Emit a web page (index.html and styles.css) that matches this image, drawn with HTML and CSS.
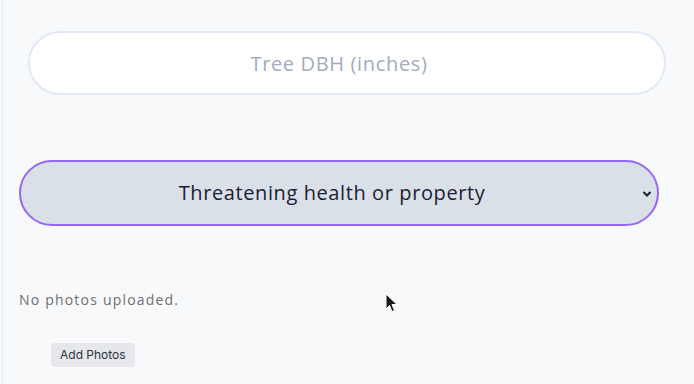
FILE: index.html
```html
<!DOCTYPE html>
<html lang="en">
<head>
    <title>Tree Request</title>
    <link rel="stylesheet" href="styles.css">
</head>
<body>
    <div class="panel">
        <div class="field-dbh">
            <input type="text" class="dbh-input" placeholder="Tree DBH (inches)">
        </div>

        <div class="field-reason">
            <div class="reason-select">
                <span class="reason-text">Threatening health or property</span>
                <svg class="chevron" width="10" height="8" viewBox="0 0 10 8">
                    <path d="M1.5 2 L5 5.5 L8.5 2" fill="none" stroke="#1a202c" stroke-width="2"/>
                </svg>
            </div>
        </div>

        <p class="no-photos">No photos uploaded.</p>

        <div class="photo-actions">
            <button class="add-photos">Add Photos</button>
        </div>
    </div>

    <svg class="cursor" width="14" height="22" viewBox="0 0 14 22">
        <path d="M1 1 L1 16 L4.5 12.5 L7 18.5 L9.5 17.5 L7 11.5 L12 11.5 Z" fill="#1b1b1b" stroke="#fff" stroke-width="1"/>
    </svg>
</body>
</html>
```

FILE: styles.css
```css
p{
    margin: 0;
}
body{
    margin: 0;
    background-color: #f8f9fb;
    font-family: "Open Sans", "Noto Sans", sans-serif;
    height: 384px;
    overflow: hidden;
}
.panel{
    margin-left: 2px;
    border-left: 1px solid #e3ebf6;
    height: 384px;
    padding-left: 16px;
    padding-right: 35px;
    padding-top: 31px;
    box-sizing: border-box;
}
.field-dbh{
    padding-left: 9px;
    margin-right: -7px;
}
.dbh-input{
    display: block;
    width: 100%;
    height: 64px;
    box-sizing: border-box;
    background-color: #ffffff;
    border: 2px solid #e2e9f5;
    border-radius: 32px;
    padding: 0 16px 0 0;
    text-align: center;
    font-family: "Open Sans", "Noto Sans", sans-serif;
    font-size: 20px;
    letter-spacing: 0.65px;
    outline: none;
}
.dbh-input::placeholder{
    color: #a2acbd;
}
.field-reason{
    margin-top: 65px;
}
.reason-select{
    height: 66px;
    box-sizing: border-box;
    border: 2px solid #9966f5;
    border-radius: 33px;
    background-color: #dae0e7;
    display: flex;
    align-items: center;
    justify-content: center;
    position: relative;
}
.reason-text{
    font-size: 20px;
    letter-spacing: 0.6px;
    color: #1a2033;
    padding-right: 14px;
    margin-top: -2px;
}
.chevron{
    position: absolute;
    right: 5px;
    top: 28px;
}
.no-photos{
    margin-top: 64px;
    font-size: 14px;
    color: #6f6f6f;
    letter-spacing: 1.2px;
}
.photo-actions{
    margin-top: 33px;
    padding-left: 32px;
}
.add-photos{
    font-family: Inter, Roboto, sans-serif;
    font-size: 12px;
    color: #2d3343;
    background-color: #e5e7eb;
    border: none;
    border-radius: 4px;
    height: 24px;
    padding: 0 9px;
}
.cursor{
    position: absolute;
    left: 385px;
    top: 293px;
}
```
